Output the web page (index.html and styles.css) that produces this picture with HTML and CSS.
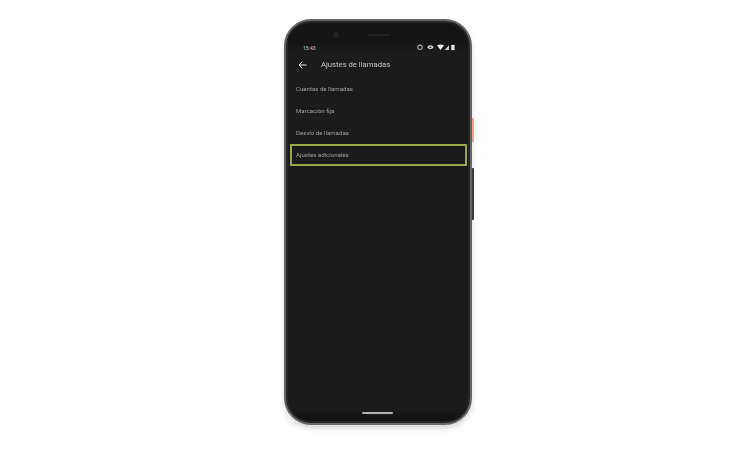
FILE: index.html
```html
<!DOCTYPE html>
<html lang="es">
<head>
<meta charset="utf-8">
<title>Ajustes de llamadas</title>
<link rel="stylesheet" href="styles.css">
</head>
<body>
<div class="phone">
  <span class="btn btn-power"></span>
  <span class="btn btn-volume"></span>
  <div class="bezel">
    <div class="sensors"><span class="camera"></span><span class="speaker"></span></div>
    <div class="status">
      <span class="time">15:43</span>
      <svg class="status-icons" width="40" height="6.6" viewBox="0 0 36 6">
        <circle cx="2.5" cy="3" r="2" fill="none" stroke="#a5a5a5" stroke-width="1"/>
        <path d="M9 3c1.5-2.4 4.5-2.4 6 0c-1.5 2.4-4.5 2.4-6 0z" fill="#ccc"/>
        <circle cx="12" cy="3" r=".8" fill="#222"/>
        <path d="M18 1.2q3.2-1.6 6.4 0L21.2 5.4z" fill="#f0f0f0"/>
        <path d="M25 5.4L29 1V5.4z" fill="#c8c8c8"/>
        <rect x="31" y=".8" width="3" height="4.8" fill="#e8e8e8"/>
      </svg>
    </div>
    <header class="toolbar">
      <svg class="back" width="9" height="8" viewBox="0 0 9 8"><path d="M8.5 4H1M4.3 .7L1 4l3.3 3.3" fill="none" stroke="#e6e6e6" stroke-width="1"/></svg>
      <h1>Ajustes de llamadas</h1>
    </header>
    <ul class="menu">
      <li>Cuentas de llamadas</li>
      <li>Marcación fija</li>
      <li>Desvío de llamadas</li>
      <li class="selected">Ajustes adicionales</li>
    </ul>
    <div class="chin"></div>
    <div class="home-bar"></div>
  </div>
</div>
</body>
</html>
```
FILE: styles.css
```css
html, body { margin: 0; height: 100%; }
body {
  width: 750px;
  height: 450px;
  overflow: hidden;
  background: #fff;
  font-family: "Roboto", "Liberation Sans", sans-serif;
  padding-top: 19px;
  box-sizing: border-box;
}
.phone {
  position: relative;
  width: 188px;
  height: 406px;
  margin-left: 284px;
  box-sizing: border-box;
  padding: 2px;
  border-radius: 27px;
  background: #262626;
  border: 2px solid #666769;
  box-shadow: 0 4px 6px -1px rgba(0,0,0,.18);
  filter: blur(.6px);
}
.btn { position: absolute; right: -4px; width: 2px; border-radius: 0 1px 1px 0; }
.btn-power { top: 97px; height: 24px; background: #f2a08c; }
.btn-volume { top: 147px; height: 52px; background: #3a3a3a; }
.bezel {
  position: relative;
  height: 100%;
  border-radius: 22px;
  background: #1b1b1b;
  display: flex;
  flex-direction: column;
  overflow: hidden;
}
.sensors {
  height: 20px;
  flex: none;
  box-sizing: border-box;
  padding: 4px 0 0 45px;
  display: flex;
  align-items: center;
  gap: 29px;
  background: #151515;
}
.camera { width: 6px; height: 6px; border-radius: 50%; background: #232323; }
.speaker { width: 22px; height: 2px; border-radius: 1px; background: #212121; }
.status {
  height: 9px;
  flex: none;
  display: flex;
  align-items: center;
  justify-content: space-between;
  padding: 0 11px 0 15px;
  background: linear-gradient(#151515, #1b1b1b);
  color: #b4b4b4;
  font-size: 5px;
  font-weight: 500;
}
.status-icons { display: block; }
.toolbar {
  height: 25px;
  flex: none;
  display: flex;
  align-items: center;
  gap: 14px;
  padding-left: 10px;
}
.back { display: block; }
.toolbar h1 {
  margin: 0;
  font-size: 7.7px;
  font-weight: 400;
  color: #c4c4c4;
}
.menu { list-style: none; margin: 0; padding: 0; flex: 1; }
.menu li {
  height: 22.3px;
  display: flex;
  align-items: center;
  padding-left: 8px;
  font-size: 6.1px;
  color: #a0a0a0;
  box-sizing: border-box;
}
.menu li.selected {
  margin-left: 2px;
  width: 177px;
  height: 22px;
  padding-left: 4px;
  border: 2px solid #98a74a;
}
.chin {
  height: 13px;
  flex: none;
  background: linear-gradient(#1b1b1b, #101010);
}
.home-bar {
  position: absolute;
  left: 74px;
  bottom: 7.5px;
  width: 31px;
  height: 2px;
  border-radius: 1px;
  background: #b4b4b4;
}
```
